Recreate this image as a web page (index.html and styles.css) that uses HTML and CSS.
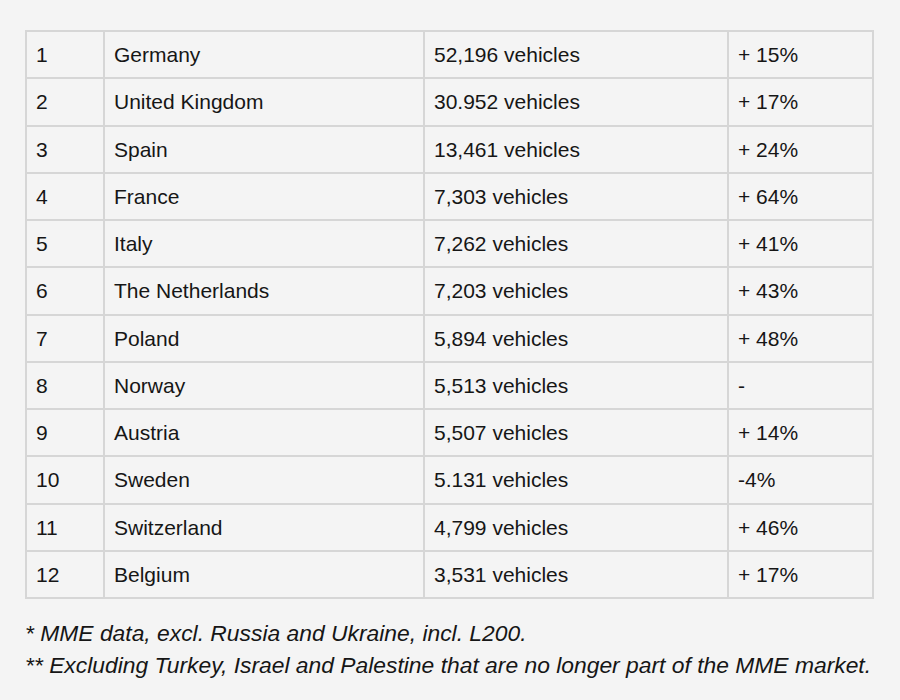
FILE: index.html
```html
<!DOCTYPE html>
<html>
<head>
<meta charset="utf-8">
<link rel="stylesheet" href="styles.css">
</head>
<body>
<div class="page">
<table class="ranking">
<colgroup><col class="c-rank"><col class="c-country"><col class="c-units"><col class="c-change"></colgroup>
<tbody>
<tr><td>1</td><td>Germany</td><td>52,196 vehicles</td><td>+ 15%</td></tr>
<tr><td>2</td><td>United Kingdom</td><td>30.952 vehicles</td><td>+ 17%</td></tr>
<tr><td>3</td><td>Spain</td><td>13,461 vehicles</td><td>+ 24%</td></tr>
<tr><td>4</td><td>France</td><td>7,303 vehicles</td><td>+ 64%</td></tr>
<tr><td>5</td><td>Italy</td><td>7,262 vehicles</td><td>+ 41%</td></tr>
<tr><td>6</td><td>The Netherlands</td><td>7,203 vehicles</td><td>+ 43%</td></tr>
<tr><td>7</td><td>Poland</td><td>5,894 vehicles</td><td>+ 48%</td></tr>
<tr><td>8</td><td>Norway</td><td>5,513 vehicles</td><td>-</td></tr>
<tr><td>9</td><td>Austria</td><td>5,507 vehicles</td><td>+ 14%</td></tr>
<tr><td>10</td><td>Sweden</td><td>5.131 vehicles</td><td>-4%</td></tr>
<tr><td>11</td><td>Switzerland</td><td>4,799 vehicles</td><td>+ 46%</td></tr>
<tr><td>12</td><td>Belgium</td><td>3,531 vehicles</td><td>+ 17%</td></tr>
</tbody>
</table>
<div class="notes">
<p>* MME data, excl. Russia and Ukraine, incl. L200.</p>
<p>** Excluding Turkey, Israel and Palestine that are no longer part of the MME market.</p>
</div>
</div>
</body>
</html>
```
FILE: styles.css
```css
html, body {
  margin: 0;
  padding: 0;
  background: #f4f4f4;
}
body {
  font-family: "Liberation Sans", Arial, sans-serif;
  color: #161616;
}
.page {
  padding: 30px 26px 0 25px;
}
.ranking {
  border-collapse: collapse;
  width: 847px;
  table-layout: fixed;
  font-size: 21px;
}
.c-rank { width: 78px; }
.c-country { width: 320px; }
.c-units { width: 304px; }
.c-change { width: 145px; }
.ranking td {
  border: 2px solid #d6d6d6;
  height: 44.25px;
  padding: 1px 9px 0 9px;
  vertical-align: middle;
  white-space: nowrap;
}
.notes {
  margin-top: 18px;
  font-size: 22.85px;
  font-style: italic;
  line-height: 32px;
}
.notes p {
  margin: 0;
}
```
